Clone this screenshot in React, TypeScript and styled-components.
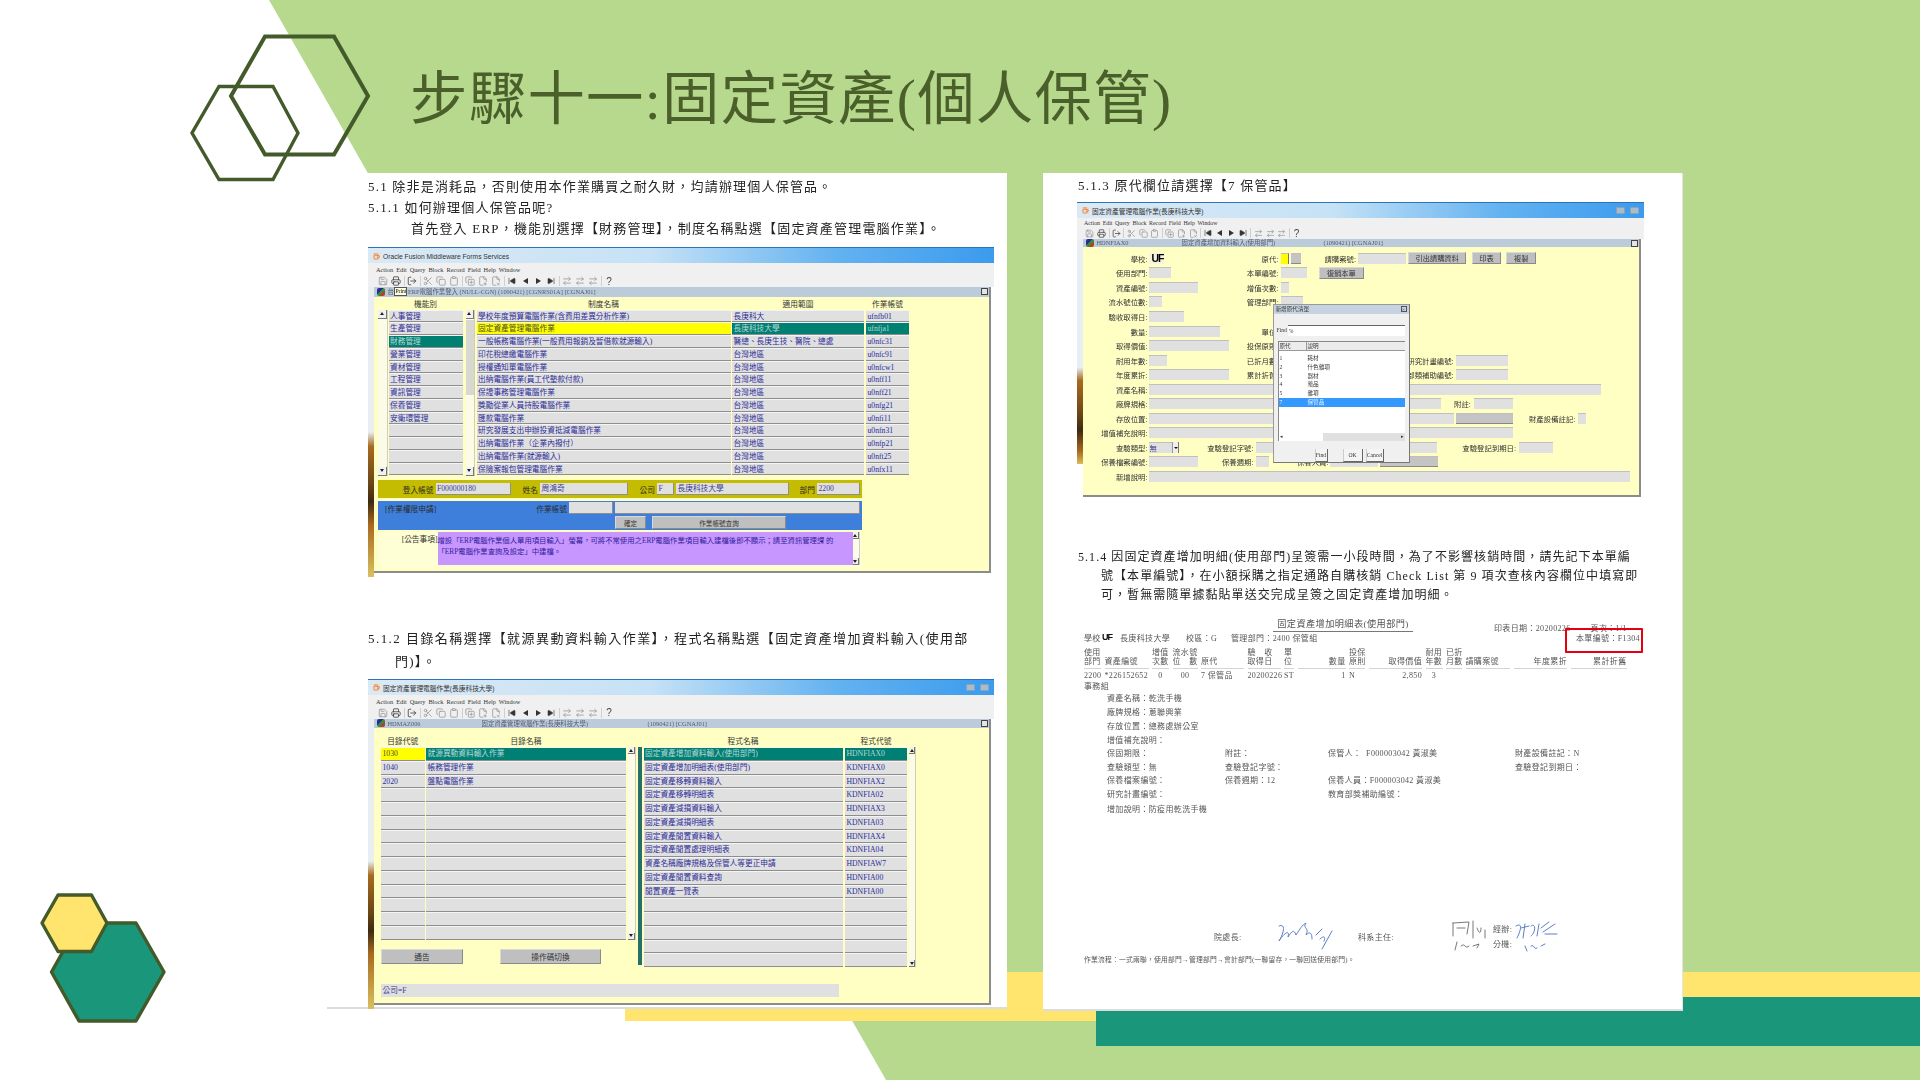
import React from "react";
import styled, { createGlobalStyle, css } from "styled-components";
import {
  Save,
  Printer,
  LogOut,
  Scissors,
  Copy,
  Clipboard,
  CopyPlus,
  FilePlus2,
  FileX2,
  SkipBack,
  SkipForward,
  ArrowRightLeft,
  Coffee,
} from "lucide-react";

const SERIF = `"Liberation Serif", "Noto Sans CJK TC", serif`;

const Global = createGlobalStyle`
  html, body { margin: 0; padding: 0; background: #fff; }
  * { box-sizing: border-box; }
`;

const Slide = styled.div`
  position: relative;
  width: 1920px;
  height: 1080px;
  overflow: hidden;
  background: #fff;
  font-family: ${SERIF};
`;
const Backdrop = styled.svg`
  position: absolute;
  inset: 0;
  width: 1920px;
  height: 1080px;
`;
const Header = styled.header`
  position: relative;
  height: 173px;
  padding: 27px 0 0 410px;
  display: flex;
  align-items: center;
`;
const Title = styled.h1`
  margin: 0;
  font-family: ${SERIF};
  font-size: 57.4px;
  font-weight: 400;
  letter-spacing: 1.3px;
  line-height: 1;
  color: #4b5f2b;
  white-space: nowrap;
`;
const Pages = styled.main`
  position: relative;
  display: flex;
  gap: 36px;
  padding-left: 327px;
`;
const Page = styled.section<{ $w: number; $h: number; $pl: number }>`
  width: ${(p) => p.$w}px;
  height: ${(p) => p.$h}px;
  padding-left: ${(p) => p.$pl}px;
  background: #fff;
  border-bottom: 2px solid #dcdcdc;
`;
const PageR = styled(Page)`
  border-right: 1px solid #e4e4e4;
`;
const Para = styled.p<{ $lh: number; $mt: number; $ml?: number; $fs?: number; $ls?: number; $hang?: number }>`
  margin: ${(p) => p.$mt}px 0 0 ${(p) => p.$ml ?? 0}px;
  font-size: ${(p) => p.$fs ?? 13}px;
  letter-spacing: ${(p) => p.$ls ?? 1.2}px;
  line-height: ${(p) => p.$lh}px;
  color: #222;
  white-space: nowrap;
  filter: blur(0.3px);
  ${(p) =>
    p.$hang &&
    css`
      padding-left: ${p.$hang}px;
      text-indent: -${p.$hang}px;
    `}
`;
const Indent = styled.span`
  display: inline-block;
  width: 43px;
`;

/* ---------- Oracle Forms window ---------- */
const Win = styled.div<{ $w: number; $h: number; $mt: number }>`
  position: relative;
  width: ${(p) => p.$w}px;
  height: ${(p) => p.$h}px;
  margin-top: ${(p) => p.$mt}px;
  display: flex;
  flex-direction: column;
  filter: blur(0.45px);
  font-size: 7.7px;
  color: #222;
`;
const TitleBar = styled.div`
  height: 16px;
  flex: none;
  display: flex;
  align-items: center;
  gap: 3px;
  padding: 1px 5px 0 5px;
  border-top: 1px solid #2a74b8;
  background: linear-gradient(90deg, #dbe9f4 0%, #c6e2f6 45%, #62b2f0 75%, #3c9bee 100%);
  font-family: "Liberation Sans", "Noto Sans CJK TC", sans-serif;
  font-size: 6.7px;
  color: #333;
  white-space: nowrap;
`;
const TitleSpacer = styled.span`
  flex: 1;
`;
const WinBtn = styled.span`
  width: 9px;
  height: 7px;
  margin-left: 2px;
  border-radius: 1px;
  background: #a8bccb;
  border: 1px solid #8aa3b5;
`;
const CupBox = styled.span`
  width: 7px;
  height: 7px;
  display: inline-flex;
  background: #f1d9c5;
  color: #d9601c;
`;
const MenuBar = styled.div<{ $compact?: boolean }>`
  height: ${(p) => (p.$compact ? 10 : 12)}px;
  flex: none;
  display: flex;
  align-items: center;
  gap: ${(p) => (p.$compact ? 2.6 : 3)}px;
  padding: 1px 0 0 ${(p) => (p.$compact ? 7 : 8)}px;
  background: #f0f0f0;
  font-size: ${(p) => (p.$compact ? 5.9 : 6.3)}px;
  color: #333;
`;
const ToolBar = styled.div<{ $compact?: boolean }>`
  height: ${(p) => (p.$compact ? 11 : 12)}px;
  flex: none;
  display: flex;
  align-items: center;
  padding-left: ${(p) => (p.$compact ? 7 : 8.5)}px;
  background: #f0f0f0;
  color: #777;
`;
const Tool = styled.span<{ $strong?: boolean; $w: number }>`
  width: ${(p) => p.$w}px;
  height: 11px;
  flex: none;
  display: inline-flex;
  align-items: center;
  justify-content: center;
  color: ${(p) => (p.$strong ? "#444" : "#9a9a9a")};
  font-size: 10px;
  font-family: "Liberation Sans", sans-serif;
`;
const ToolSep = styled.span`
  width: 1px;
  height: 10px;
  margin: 0 1px;
  background: #cfcfcf;
`;
const Tri = styled.span<{ $dir: "l" | "r" }>`
  width: 0;
  height: 0;
  border-top: 3.5px solid transparent;
  border-bottom: 3.5px solid transparent;
  ${(p) =>
    p.$dir === "l"
      ? "border-right: 5px solid #333;"
      : "border-left: 5px solid #333;"}
`;
const WinBody = styled.div`
  flex: 1;
  display: flex;
  min-height: 0;
`;
const Strip = styled.div<{ $from: number; $end: number }>`
  width: 5.5px;
  flex: none;
  background: linear-gradient(
    180deg,
    #e8eef2 0%,
    #e8eef2 ${(p) => p.$from}%,
    #a86a20 ${(p) => p.$from + 5}%,
    #6a4516 ${(p) => p.$from + 18}%,
    #3c2a10 ${(p) => p.$from + 24}%,
    #a86a20 ${(p) => p.$from + 32}%,
    #d9c060 ${(p) => p.$end}%,
    #fff ${(p) => p.$end}%
  );
`;
const Pane = styled.div`
  flex: 1;
  margin: 0 3px 4px 0;
  display: flex;
  flex-direction: column;
  border-right: 2px solid #8c8c8c;
  border-bottom: 2px solid #8c8c8c;
  min-width: 0;
`;
const Status = styled.div<{ $compact?: boolean }>`
  position: relative;
  height: ${(p) => (p.$compact ? 8.5 : 9.5)}px;
  flex: none;
  display: flex;
  align-items: center;
  padding-left: 3px;
  background: #bccbda;
  color: #555a70;
  font-size: 6.4px;
  white-space: nowrap;
`;
const StatusIcon = styled.span`
  width: 8px;
  height: 8px;
  flex: none;
  margin-right: 3px;
  border-radius: 2px;
  background: linear-gradient(135deg, #2a2a9a 0 40%, #3a8a3a 40% 65%, #c0392b 65%);
`;
const StatusText = styled.span<{ $w?: number }>`
  display: inline-block;
  width: ${(p) => (p.$w ? `${p.$w}px` : "auto")};
`;
const StatusBox = styled.span`
  position: absolute;
  right: 1px;
  top: 1px;
  width: 7px;
  height: 7px;
  background: #e4e4e4;
  border: 1.5px solid #444;
`;
const Tooltip = styled.span`
  flex: none;
  width: 13px;
  height: 9px;
  margin: 0 0.5px 0 0.5px;
  text-align: center;
  background: #ffffe1;
  border: 1px solid #555;
  color: #111;
  font-size: 5.6px;
  line-height: 7px;
`;
const Form = styled.div<{ $pl: number; $pt: number }>`
  flex: 1;
  min-height: 0;
  position: relative;
  padding: ${(p) => p.$pt}px 0 0 ${(p) => p.$pl}px;
  background: #ffffc4;
`;
const ListArea = styled.div`
  display: flex;
  align-items: flex-start;
`;
const Col = styled.div<{ $w: number; $ml?: number }>`
  width: ${(p) => p.$w}px;
  margin-left: ${(p) => p.$ml ?? 0}px;
  flex: none;
`;
const ColHead = styled.div<{ $h: number }>`
  height: ${(p) => p.$h}px;
  line-height: ${(p) => p.$h}px;
  text-align: center;
  color: #333;
  white-space: nowrap;
`;
const Cell = styled.div<{ $h: number; $st?: string }>`
  height: ${(p) => p.$h}px;
  line-height: ${(p) => p.$h - 1.5}px;
  padding-left: 1.5px;
  overflow: hidden;
  white-space: nowrap;
  background: #e0e0e0;
  color: #2c2c98;
  border-bottom: 1.5px solid #8e8e8e;
  border-top: 0.5px solid #f4f4f4;
  ${(p) =>
    p.$st === "teal" &&
    css`
      background: #007f73;
      color: #b9d7d5;
    `}
  ${(p) =>
    p.$st === "yellow" &&
    css`
      background: #ffff00;
      color: #4c4a30;
    `}
`;
const ScrollTrack = styled.div<{ $w: number; $h: number; $ml?: number; $mt: number }>`
  position: relative;
  flex: none;
  width: ${(p) => p.$w}px;
  height: ${(p) => p.$h}px;
  margin: ${(p) => p.$mt}px 0 0 ${(p) => p.$ml ?? 0}px;
  background: #fbfbe8;
  display: flex;
  flex-direction: column;
  justify-content: space-between;
  border-right: 1px solid #cfcfb4;
`;
const ScrollBtn = styled.span<{ $down?: boolean; $sq: number }>`
  flex: none;
  height: ${(p) => p.$sq}px;
  display: flex;
  align-items: center;
  justify-content: center;
  background: #f1f1f1;
  border-right: 1px solid #777;
  border-bottom: 1px solid #777;
  &::after {
    content: "";
    width: 0;
    height: 0;
    border-left: 2px solid transparent;
    border-right: 2px solid transparent;
    ${(p) =>
      p.$down ? "border-top: 3px solid #222;" : "border-bottom: 3px solid #222;"}
  }
`;
const Thumb = styled.span<{ $top: number; $h: number }>`
  position: absolute;
  left: 0;
  right: 0;
  top: ${(p) => p.$top}px;
  height: ${(p) => p.$h}px;
  background: #d8d8d0;
`;
const TealStrip = styled.div<{ $mt: number; $h: number; $ml: number }>`
  width: 4px;
  height: ${(p) => p.$h}px;
  margin: ${(p) => p.$mt}px 0 0 ${(p) => p.$ml}px;
  flex: none;
  background: #26706c;
`;
const Bar = styled.div<{ $bg: string; $mt: number; $h: number; $w: number; $ml?: number }>`
  width: ${(p) => p.$w}px;
  height: ${(p) => p.$h}px;
  margin: ${(p) => p.$mt}px 0 0 ${(p) => p.$ml ?? 0}px;
  background: ${(p) => p.$bg};
  display: flex;
  align-items: center;
`;
const BlueBar = styled(Bar)`
  flex-direction: column;
  align-items: flex-start;
  justify-content: flex-start;
  gap: 2px;
  padding-top: 1px;
`;
const BlueRow = styled.div<{ $pl?: number }>`
  display: flex;
  align-items: center;
  padding-left: ${(p) => p.$pl ?? 0}px;
`;
const BarLabel = styled.span<{ $w: number; $left?: boolean; $pl?: number }>`
  width: ${(p) => p.$w}px;
  flex: none;
  padding-left: ${(p) => p.$pl ?? 0}px;
  text-align: ${(p) => (p.$left ? "left" : "right")};
  color: #2a2a2a;
  white-space: nowrap;
`;
const BarField = styled.span<{ $w: number; $ml?: number; $h?: number }>`
  width: ${(p) => p.$w}px;
  height: ${(p) => p.$h ?? 12}px;
  line-height: ${(p) => p.$h ?? 12}px;
  margin-left: ${(p) => p.$ml ?? 2}px;
  flex: none;
  padding-left: 1.5px;
  background: #e0e0e0;
  color: #3c3c90;
  border-right: 1px solid #8e8e8e;
  border-bottom: 1px solid #8e8e8e;
  overflow: hidden;
  white-space: nowrap;
`;
const FormBtn = styled.span<{ $w: number; $ml?: number; $h: number; $fs?: number }>`
  width: ${(p) => p.$w}px;
  height: ${(p) => p.$h}px;
  line-height: ${(p) => p.$h}px;
  margin-left: ${(p) => p.$ml ?? 0}px;
  flex: none;
  display: inline-block;
  text-align: center;
  font-size: ${(p) => p.$fs ?? 7.7}px;
  color: #333;
  background: #bfbfbf;
  border-right: 1px solid #8a8a8a;
  border-bottom: 1px solid #8a8a8a;
  border-top: 1px solid #d9d9d9;
  border-left: 1px solid #d9d9d9;
  white-space: nowrap;
`;
const NoticeRow = styled.div`
  display: flex;
  width: 484px;
  height: 36px;
  margin-top: 2px;
  background: #ffffd6;
`;
const NoticeLabel = styled.span`
  width: 59.5px;
  flex: none;
  padding-top: 1px;
  text-align: right;
  color: #333;
  white-space: nowrap;
`;
const NoticeText = styled.div`
  width: 415px;
  height: 33px;
  flex: none;
  padding: 2.5px 1px 0 0;
  font-size: 7.35px;
  line-height: 11.5px;
  background: #c896ff;
  color: #30209a;
`;
const LeftBlock = styled.div`
  flex: none;
  display: flex;
  flex-direction: column;
`;
const ButtonRow = styled.div`
  display: flex;
  margin-top: 9px;
`;
const BottomField = styled.div`
  width: 458px;
  height: 13px;
  line-height: 13px;
  margin-top: 16.5px;
  padding-left: 1.5px;
  background: #e0e0e0;
  color: #3c3c90;
`;

/* ---------- record entry form ---------- */
const RecordRow = styled.div`
  display: flex;
  align-items: center;
  height: 14.55px;
`;
const RecLabel = styled.span<{ $w: number }>`
  width: ${(p) => p.$w}px;
  flex: none;
  text-align: right;
  font-size: 7.4px;
  color: #333;
  white-space: nowrap;
`;
const RecField = styled.span<{ $w: number; $ml: number; $kind?: string }>`
  width: ${(p) => p.$w}px;
  margin-left: ${(p) => p.$ml}px;
  height: 11px;
  flex: none;
  display: inline-flex;
  align-items: center;
  font-size: 7.4px;
  background: #e0e0e0;
  border-top: 1px solid #bfbfbf;
  color: #3c3c90;
  ${(p) =>
    p.$kind === "yellow" &&
    css`
      background: #ffff00;
      border-right: 1px solid #777;
    `}
  ${(p) =>
    p.$kind === "gray" &&
    css`
      background: #c4c4c4;
      border-bottom: 1px solid #888;
    `}
  ${(p) =>
    p.$kind === "logo" &&
    css`
      background: #f4f4e0;
      border: none;
      padding-left: 2px;
      color: #000;
      font: 700 10.5px "Liberation Sans", sans-serif;
      letter-spacing: -1px;
    `}
`;
const RecBtn = styled(FormBtn)<{ $mlx: number }>`
  margin-left: ${(p) => p.$mlx}px;
`;
const SelectCaret = styled.span`
  margin-left: auto;
  width: 7px;
  height: 11px;
  background: #f0f0f0;
  border-left: 1px solid #999;
  border-right: 1px solid #777;
  display: flex;
  align-items: center;
  justify-content: center;
  &::after {
    content: "";
    border-left: 2px solid transparent;
    border-right: 2px solid transparent;
    border-top: 2.5px solid #111;
  }
`;
const Dialog = styled.div`
  position: absolute;
  left: 195.5px;
  top: 102px;
  width: 137px;
  height: 159px;
  background: #f0f0f0;
  border: 1px solid #9a9a9a;
  border-right: 1.5px solid #777;
  border-bottom: 1.5px solid #777;
  display: flex;
  flex-direction: column;
  font-size: 5.6px;
  color: #333;
  z-index: 3;
`;
const DialogTitle = styled.div`
  height: 9px;
  flex: none;
  display: flex;
  align-items: center;
  justify-content: space-between;
  padding: 0 2px;
  background: #c6d2df;
`;
const DialogClose = styled.span`
  width: 6px;
  height: 6px;
  line-height: 5px;
  text-align: center;
  border: 1px solid #555;
  font-size: 5px;
`;
const FindRow = styled.div`
  display: flex;
  align-items: center;
  margin: 11px 4px 0 3px;
  gap: 1px;
`;
const FindInput = styled.span`
  flex: 1;
  height: 11px;
  line-height: 11px;
  padding-left: 1px;
  background: #fff;
  border-top: 1px solid #666;
`;
const DialogList = styled.div`
  margin: 5.5px 4px 0 4px;
  height: 100px;
  display: flex;
  flex-direction: column;
  background: #fff;
  border-top: 1px solid #888;
  border-left: 1px solid #888;
`;
const DialogHead = styled.div`
  display: flex;
  height: 9px;
  line-height: 9px;
  flex: none;
  background: #ececec;
  border-bottom: 1px solid #999;
`;
const DialogCol = styled.span<{ $w: number; $line?: boolean }>`
  width: ${(p) => p.$w}px;
  flex: none;
  padding-left: 1px;
  ${(p) => p.$line && "border-right: 1px solid #999;"}
`;
const DialogRow = styled.div<{ $sel?: boolean }>`
  display: flex;
  height: 8.8px;
  line-height: 8.8px;
  flex: none;
  ${(p) =>
    p.$sel &&
    css`
      background: #3399ff;
      color: #e8f2ff;
    `}
`;
const DialogRows = styled.div`
  flex: 1;
  padding-top: 3px;
`;
const DialogHScroll = styled.div`
  height: 7.5px;
  flex: none;
  display: flex;
  justify-content: space-between;
  background: linear-gradient(90deg, #fff 0 35%, #e0e0e0 35%);
  font-size: 5px;
  line-height: 7px;
  padding: 0 1px;
`;
const DialogBtns = styled.div`
  display: flex;
  margin: 8px 0 0 41px;
`;
const DialogBtn = styled.span<{ $w: number; $ml: number }>`
  width: ${(p) => p.$w}px;
  height: 13px;
  line-height: 12px;
  margin-left: ${(p) => p.$ml}px;
  text-align: center;
  background: #f4f4f4;
  border-right: 1.5px solid #666;
  border-bottom: 1.5px solid #666;
  border-left: 1px solid #ccc;
`;

/* ---------- printed report ---------- */
const Report = styled.div`
  position: relative;
  width: 565px;
  margin: 13px 0 0 7px;
  font-size: 8px;
  letter-spacing: 0.35px;
  color: #555;
  filter: blur(0.35px);
`;
const ReportTop = styled.div`
  display: flex;
  height: 14px;
  align-items: flex-start;
`;
const ReportTitle = styled.span`
  margin: 0 0 0 189px;
  width: 140px;
  text-align: center;
  font-size: 9.2px;
  line-height: 13px;
  letter-spacing: 0.4px;
  border-bottom: 1px solid #777;
`;
const ReportDate = styled.span`
  margin: 4px 0 0 81px;
  white-space: nowrap;
`;
const ReportPage = styled.span`
  margin: 4px 0 0 20px;
  white-space: nowrap;
`;
const ReportLine = styled.div`
  display: flex;
  align-items: center;
  height: 14px;
  white-space: nowrap;
`;
const Slot = styled.span<{ $w: number; $right?: boolean; $center?: boolean; $rule?: boolean }>`
  width: ${(p) => p.$w}px;
  flex: none;
  white-space: nowrap;
  line-height: 9px;
  text-align: ${(p) => (p.$right ? "right" : p.$center ? "center" : "left")};
  ${(p) => p.$rule && "border-bottom: 1px solid #d4d4d4; padding-bottom: 2px;"}
`;
const UfMark = styled.span`
  width: 11px;
  margin: -4px 7px 0 6px;
  font: 700 9px "Liberation Sans", sans-serif;
  letter-spacing: -1px;
  color: #111;
`;
const RedBox = styled.div`
  position: absolute;
  left: 481px;
  top: 10.5px;
  width: 78px;
  height: 25px;
  border: 2px solid #e3000f;
  border-radius: 1px;
`;
const ReportHead = styled.div`
  display: flex;
  align-items: flex-end;
  gap: 3.5px;
  height: 23px;
`;
const ReportData = styled.div`
  display: flex;
  align-items: center;
  gap: 3.5px;
  height: 14px;
`;
const Dept = styled.div`
  height: 8px;
  line-height: 7px;
  white-space: nowrap;
`;
const Details = styled.div`
  margin: 0.5px 0 0 23px;
`;
const DetailRow = styled.div`
  display: flex;
  align-items: center;
  height: 13.85px;
  white-space: nowrap;
`;
const SignRow = styled.div`
  display: flex;
  align-items: center;
  height: 30px;
  margin-top: 105.5px;
  padding-left: 130px;
  white-space: nowrap;
`;
const SignLabel = styled.span<{ $w: number; $pl?: number }>`
  width: ${(p) => p.$w}px;
  padding-left: ${(p) => p.$pl ?? 0}px;
  flex: none;
`;
const Scribble = styled.svg`
  flex: none;
  fill: none;
  stroke-linecap: round;
  stroke-linejoin: round;
`;
const SignStack = styled.div`
  display: flex;
  flex-direction: column;
  gap: 4px;
  width: 20px;
`;
const Flow = styled.div`
  margin-top: 4px;
  font-size: 6.8px;
  letter-spacing: 0.2px;
  line-height: 10px;
  white-space: nowrap;
`;

/* ---------- data ---------- */
const range = (n: number) => Array.from({ length: n }, (_, i) => i);

const Scroll = ({
  w,
  h,
  mt,
  ml,
  sq,
  thumb,
}: {
  w: number;
  h: number;
  mt: number;
  ml?: number;
  sq: number;
  thumb?: [number, number];
}) => (
  <ScrollTrack $w={w} $h={h} $mt={mt} $ml={ml}>
    <ScrollBtn $sq={sq} />
    {thumb && <Thumb $top={thumb[0]} $h={thumb[1]} />}
    <ScrollBtn $sq={sq} $down />
  </ScrollTrack>
);

const MENU = ["Action", "Edit", "Query", "Block", "Record", "Field", "Help", "Window"];

const Toolbar = ({ compact }: { compact?: boolean }) => {
  const tw = compact ? 11.8 : 13;
  const Icon = { size: compact ? 9 : 10, strokeWidth: 2 };
  return (
    <ToolBar $compact={compact}>
      <Tool $w={tw}>
        <Save {...Icon} />
      </Tool>
      <Tool $w={tw} $strong>
        <Printer {...Icon} />
      </Tool>
      <ToolSep />
      <Tool $w={tw} $strong>
        <LogOut {...Icon} />
      </Tool>
      <ToolSep />
      <Tool $w={tw}>
        <Scissors {...Icon} />
      </Tool>
      <Tool $w={tw}>
        <Copy {...Icon} />
      </Tool>
      <Tool $w={tw}>
        <Clipboard {...Icon} />
      </Tool>
      <ToolSep />
      <Tool $w={tw}>
        <CopyPlus {...Icon} />
      </Tool>
      <Tool $w={tw}>
        <FilePlus2 {...Icon} />
      </Tool>
      <Tool $w={tw}>
        <FileX2 {...Icon} />
      </Tool>
      <ToolSep />
      <Tool $w={tw} $strong>
        <SkipBack size={8} fill="#333" />
      </Tool>
      <Tool $w={tw} $strong>
        <Tri $dir="l" />
      </Tool>
      <Tool $w={tw} $strong>
        <Tri $dir="r" />
      </Tool>
      <Tool $w={tw} $strong>
        <SkipForward size={8} fill="#333" />
      </Tool>
      <ToolSep />
      <Tool $w={tw}>
        <ArrowRightLeft {...Icon} />
      </Tool>
      <Tool $w={tw}>
        <ArrowRightLeft {...Icon} />
      </Tool>
      <Tool $w={tw}>
        <ArrowRightLeft {...Icon} />
      </Tool>
      <ToolSep />
      <Tool $w={tw} $strong>
        ?
      </Tool>
    </ToolBar>
  );
};

const Chrome = ({
  title,
  w,
  h,
  mt,
  from,
  end = 100,
  buttons,
  compact,
  status,
  children,
  over,
}: {
  title: string;
  w: number;
  h: number;
  mt: number;
  from: number;
  end?: number;
  buttons?: boolean;
  compact?: boolean;
  status: React.ReactNode;
  children: React.ReactNode;
  over?: React.ReactNode;
}) => (
  <Win $w={w} $h={h} $mt={mt}>
    <TitleBar>
      <CupBox>
        <Coffee size={7} />
      </CupBox>
      {title}
      <TitleSpacer />
      {buttons && (
        <>
          <WinBtn />
          <WinBtn />
        </>
      )}
    </TitleBar>
    <MenuBar $compact={compact}>
      {MENU.map((m) => (
        <span key={m}>{m}</span>
      ))}
    </MenuBar>
    <Toolbar compact={compact} />
    <WinBody>
      <Strip $from={from} $end={end} />
      <Pane>
        <Status $compact={compact}>
          <StatusIcon />
          {status}
          <StatusBox />
        </Status>
        {children}
      </Pane>
    </WinBody>
    {over}
  </Win>
);

const W1_LIST = ["人事管理", "生產管理", "財務管理", "營業管理", "資材管理", "工程管理", "資訊管理", "保養管理", "安衛環管理", "", "", "", ""];
const W1_NAME = [
  "學校年度預算電腦作業(含費用差異分析作業)",
  "固定資產管理電腦作業",
  "一般帳務電腦作業(一般費用報銷及暫借款就源輸入)",
  "印花稅總繳電腦作業",
  "授權通知單電腦作業",
  "出納電腦作業(員工代墊款付款)",
  "保證事務管理電腦作業",
  "獎勵從業人員持股電腦作業",
  "匯款電腦作業",
  "研究發展支出申辦投資抵減電腦作業",
  "出納電腦作業（企業內撥付）",
  "出納電腦作業(就源輸入)",
  "保險案報包管理電腦作業",
];
const W1_RANGE = ["長庚科大", "長庚科技大學", "醫總、長庚生技、醫院、總處", ...range(10).map(() => "台灣地區")];
const W1_CODE = ["ufnfb01", "ufnfja1", "u0nfc31", "u0nfc91", "u0nfcw1", "u0nff11", "u0nff21", "u0nfg21", "u0nfi11", "u0nfn31", "u0nfp21", "u0nft25", "u0nfx11"];

const W2_A = ["1030", "1040", "2020"];
const W2_B = ["就源異動資料輸入作業", "帳務管理作業", "盤點電腦作業"];
const W2_C = [
  "固定資產增加資料輸入(使用部門)",
  "固定資產增加明細表(使用部門)",
  "固定資產移轉資料輸入",
  "固定資產移轉明細表",
  "固定資產減損資料輸入",
  "固定資產減損明細表",
  "固定資產閒置資料輸入",
  "固定資產閒置處理明細表",
  "資產名稱廠牌規格及保管人等更正申請",
  "固定資產閒置資料查詢",
  "閒置資產一覽表",
];
const W2_D = ["HDNFIAX0", "KDNFIAX0", "HDNFIAX2", "KDNFIA02", "HDNFIAX3", "KDNFIA03", "HDNFIAX4", "KDNFIA04", "HDNFIAW7", "HDNFIA00", "KDNFIA00"];

type RecCell = {
  label?: string;
  le?: number;
  s?: number;
  e?: number;
  kind?: string;
  text?: string;
  btn?: string;
};
const S = 1 / 2.613;
const RECORDS: RecCell[][] = [
  [
    { label: "學校:", le: 230, s: 235, e: 272, kind: "logo", text: "UF" },
    { label: "原代:", le: 572, s: 578, e: 600, kind: "yellow" },
    { s: 605, e: 632, kind: "gray" },
    { label: "請購案號:", le: 775, s: 780, e: 905 },
    { s: 912, e: 1062, btn: "引出請購資料" },
    { s: 1077, e: 1155, btn: "印表" },
    { s: 1168, e: 1246, btn: "複製" },
  ],
  [
    { label: "使用部門:", le: 230, s: 235, e: 292 },
    { label: "本單編號:", le: 572, s: 578, e: 647 },
    { s: 678, e: 795, btn: "復銷本單" },
  ],
  [
    { label: "資產編號:", le: 230, s: 235, e: 361 },
    { label: "增值次數:", le: 572, s: 578, e: 600 },
  ],
  [
    { label: "流水號位數:", le: 230, s: 235, e: 268 },
    { label: "管理部門:", le: 572, s: 578, e: 635 },
  ],
  [{ label: "驗收取得日:", le: 230, s: 235, e: 326 }],
  [
    { label: "數量:", le: 230, s: 235, e: 419 },
    { label: "單位:", le: 572, s: 578, e: 700 },
  ],
  [
    { label: "取得價值:", le: 230, s: 235, e: 442 },
    { label: "投保原則:", le: 572, s: 578, e: 800 },
  ],
  [
    { label: "耐用年數:", le: 230, s: 235, e: 280 },
    { label: "已折月數:", le: 572, s: 578, e: 700 },
    { label: "研究計畫編號:", le: 1030, s: 1036, e: 1172 },
  ],
  [
    { label: "年度累折:", le: 230, s: 235, e: 442 },
    { label: "累計折舊:", le: 572, s: 578, e: 800 },
    { label: "部類補助編號:", le: 1030, s: 1036, e: 1172 },
  ],
  [{ label: "資產名稱:", le: 230, s: 235, e: 1416 }],
  [
    { label: "廠牌規格:", le: 230, s: 235, e: 997 },
    { label: "附註:", le: 1075, s: 1082, e: 1185 },
  ],
  [
    { label: "存放位置:", le: 230, s: 235, e: 1030 },
    { s: 1036, e: 1185, kind: "gray" },
    { label: "財產設備註記:", le: 1348, s: 1354, e: 1376 },
  ],
  [{ label: "增值補充說明:", le: 230, s: 235, e: 1185 }],
  [
    { label: "查驗類型:", le: 230, s: 235, e: 313, kind: "select", text: "無" },
    { label: "查驗登記字號:", le: 507, s: 513, e: 987 },
    { label: "查驗登記到期日:", le: 1193, s: 1200, e: 1290 },
  ],
  [
    { label: "保養檔案編號:", le: 230, s: 235, e: 361 },
    { label: "保養週期:", le: 507, s: 513, e: 547 },
    { label: "保養人員:", le: 703, s: 708, e: 833 },
    { s: 838, e: 988, kind: "gray" },
  ],
  [{ label: "新增說明:", le: 230, s: 235, e: 1490 }],
];

const Records = () => (
  <>
    {RECORDS.map((row, i) => {
      let cur = 60;
      return (
        <RecordRow key={i}>
          {row.map((c, j) => {
            const s = c.s ?? 0;
            const e = c.e ?? 0;
            const le = c.le ?? cur;
            const labelW = (le - cur) * S;
            const ml = (s - le) * S;
            const w = (e - s) * S;
            cur = e;
            return (
              <React.Fragment key={j}>
                {c.label && <RecLabel $w={labelW}>{c.label}</RecLabel>}
                {c.btn ? (
                  <RecBtn $w={w} $h={12} $mlx={ml} $fs={7.2}>
                    {c.btn}
                  </RecBtn>
                ) : (
                  <RecField $w={w} $ml={ml} $kind={c.kind}>
                    {c.text}
                    {c.kind === "select" && <SelectCaret />}
                  </RecField>
                )}
              </React.Fragment>
            );
          })}
        </RecordRow>
      );
    })}
  </>
);

const REPORT_COLS: [string, string, number, ("r" | "c")?][] = [
  ["使用", "部門", 17],
  ["", "資產編號", 44],
  ["增值", "次數", 17],
  ["流水號", "位　數", 25],
  ["", "原代", 43],
  ["驗　收", "取得日", 33],
  ["單", "位", 10],
  ["", "數量", 48, "r"],
  ["投保", "原則", 16],
  ["", "取得價值", 53.5, "r"],
  ["耐用", "年數", 17],
  ["已折", "月數", 16],
  ["", "請購案號", 44.5],
  ["", "年度累折", 53.5, "r"],
  ["", "累計折舊", 56, "r"],
];
const REPORT_VALS = ["2200", "*226152652", "0", "00", "7 保管品", "20200226", "ST", "1", "N", "2,850", "3", "", "", "", ""];

const DIALOG_ROWS = [
  ["1", "耗材"],
  ["2", "什色雜項"],
  ["3", "器材"],
  ["4", "藥品"],
  ["5", "雜項"],
  ["7", "保管品"],
];

export default function App() {
  return (
    <Slide>
      <Global />
      <Backdrop viewBox="0 0 1920 1080">
        <polygon points="269,0 1920,0 1920,1080 886,1080" fill="#b7d98e" />
        <rect x="625" y="972" width="1295" height="49" fill="#ffe56d" />
        <rect x="1096" y="997" width="824" height="49" fill="#1a967b" />
        <g fill="none" stroke="#435a2a" strokeWidth="4" strokeLinejoin="miter">
          <polygon points="265,36.5 334,36.5 368,96 334,154.5 265,154.5 231,96" />
          <polygon points="219,86.5 273,86.5 298,133 273,179.5 219,179.5 192,133" strokeWidth="3.4" />
        </g>
        <g stroke="#435a2a" strokeWidth="3.4" strokeLinejoin="round">
          <polygon points="79,923 136,923 164,972 136,1021 79,1021 51.5,972" fill="#1a967b" />
          <polygon points="58,895 91.5,895 107,923 91.5,951.5 58,951.5 42,923" fill="#ffe56d" />
        </g>
      </Backdrop>

      <Header>
        <Title>步驟十一:固定資產(個人保管)</Title>
      </Header>

      <Pages>
        <Page $w={680} $h={836} $pl={41}>
          <Para $lh={21} $mt={2.5}>
            5.1 除非是消耗品，否則使用本作業購買之耐久財，均請辦理個人保管品。
            <br />
            5.1.1 如何辦理個人保管品呢?
            <br />
            <Indent />
            首先登入 ERP，機能別選擇【財務管理】，制度名稱點選【固定資產管理電腦作業】。
          </Para>
          <Chrome
            title="Oracle Fusion Middleware Forms Services"
            w={626}
            h={330}
            mt={8.5}
            from={50}
            status={
              <>
                <StatusText>台</StatusText>
                <Tooltip>Print</Tooltip>
                <StatusText>ERP電腦作業登入 (NULL-CGN) (1090421) [CGNRS01A] [CGNAJ01]</StatusText>
              </>
            }
          >
            <Form $pl={4.5} $pt={3}>
              <ListArea>
                <Scroll w={9.5} h={166} mt={10} sq={9} />
                <Col $w={74} $ml={1}>
                  <ColHead $h={10}>機能別</ColHead>
                  {W1_LIST.map((t, i) => (
                    <Cell key={i} $h={12.77} $st={i === 2 ? "teal" : undefined}>
                      {t}
                    </Cell>
                  ))}
                </Col>
                <Scroll w={9.5} h={166} mt={10} ml={3} sq={9} thumb={[10, 75]} />
                <Col $w={254} $ml={1.5}>
                  <ColHead $h={10}>制度名稱</ColHead>
                  {W1_NAME.map((t, i) => (
                    <Cell key={i} $h={12.77} $st={i === 1 ? "yellow" : undefined}>
                      {t}
                    </Cell>
                  ))}
                </Col>
                <Col $w={132} $ml={1.5}>
                  <ColHead $h={10}>適用範圍</ColHead>
                  {W1_RANGE.map((t, i) => (
                    <Cell key={i} $h={12.77} $st={i === 1 ? "teal" : undefined}>
                      {t}
                    </Cell>
                  ))}
                </Col>
                <Col $w={43} $ml={2}>
                  <ColHead $h={10}>作業帳號</ColHead>
                  {W1_CODE.map((t, i) => (
                    <Cell key={i} $h={12.77} $st={i === 1 ? "teal" : undefined}>
                      {t}
                    </Cell>
                  ))}
                </Col>
              </ListArea>
              <Bar $bg="#c4bc00" $mt={4.5} $h={18} $w={484}>
                <BarLabel $w={55.5}>登入帳號</BarLabel>
                <BarField $w={75.5}>F000000180</BarField>
                <BarLabel $w={27}>姓名</BarLabel>
                <BarField $w={88}>周鴻奇</BarField>
                <BarLabel $w={27}>公司</BarLabel>
                <BarField $w={17}>F</BarField>
                <BarField $w={113}>長庚科技大學</BarField>
                <BarLabel $w={26}>部門</BarLabel>
                <BarField $w={43}>2200</BarField>
              </Bar>
              <BlueBar $bg="#3f7fdc" $mt={3} $h={29} $w={484}>
                <BlueRow>
                  <BarLabel $w={135} $left $pl={7}>
                    [作業權限申請]
                  </BarLabel>
                  <BarLabel $w={54}>作業帳號</BarLabel>
                  <BarField $w={44}></BarField>
                  <BarField $w={245}></BarField>
                </BlueRow>
                <BlueRow $pl={237}>
                  <FormBtn $w={31} $h={13} $fs={6.6}>
                    確定
                  </FormBtn>
                  <FormBtn $w={134} $h={13} $ml={6} $fs={6.6}>
                    作業帳號查詢
                  </FormBtn>
                </BlueRow>
              </BlueBar>
              <NoticeRow>
                <NoticeLabel>[公告事項]</NoticeLabel>
                <NoticeText>
                  增設「ERP電腦作業個人單用項目輸入」螢幕，可將不常使用之ERP電腦作業項目輸入建檔後即不顯示；請至資訊管理課
                  的「ERP電腦作業查詢及設定」中建檔。
                </NoticeText>
                <Scroll w={7.5} h={33} mt={0} sq={7} />
              </NoticeRow>
            </Form>
          </Chrome>
          <Para $lh={23} $mt={50} $ls={1.45}>
            5.1.2 目錄名稱選擇【就源異動資料輸入作業】，程式名稱點選【固定資產增加資料輸入(使用部
          </Para>
          <Para $lh={23} $mt={0} $ml={27}>
            門)】。
          </Para>
          <Chrome
            title="固定資產管理電腦作業(長庚科技大學)"
            w={626}
            h={330}
            mt={5.5}
            from={49}
            buttons
            status={
              <>
                <StatusText $w={94}>HDMAZ006</StatusText>
                <StatusText $w={166}>固定資產管理電腦作業(長庚科技大學)</StatusText>
                <StatusText>(1090421) [CGNAJ01]</StatusText>
              </>
            }
          >
            <Form $pl={7.5} $pt={9}>
              <ListArea>
                <LeftBlock>
                  <ListArea>
                    <Col $w={43.5}>
                      <ColHead $h={10}>目錄代號</ColHead>
                      {range(14).map((i) => (
                        <Cell key={i} $h={13.77} $st={i === 0 ? "yellow" : undefined}>
                          {W2_A[i]}
                        </Cell>
                      ))}
                    </Col>
                    <Col $w={200} $ml={1.5}>
                      <ColHead $h={10}>目錄名稱</ColHead>
                      {range(14).map((i) => (
                        <Cell key={i} $h={13.77} $st={i === 0 ? "teal" : undefined}>
                          {W2_B[i]}
                        </Cell>
                      ))}
                    </Col>
                    <Scroll w={7.5} h={192.8} mt={10} ml={2} sq={7} />
                  </ListArea>
                  <ButtonRow>
                    <FormBtn $w={82} $h={15}>
                      通告
                    </FormBtn>
                    <FormBtn $w={101} $h={15} $ml={37}>
                      操作碼切換
                    </FormBtn>
                  </ButtonRow>
                </LeftBlock>
                <TealStrip $ml={2} $mt={10} $h={218} />
                <Col $w={199} $ml={2}>
                  <ColHead $h={10}>程式名稱</ColHead>
                  {range(16).map((i) => (
                    <Cell key={i} $h={13.77} $st={i === 0 ? "teal" : undefined}>
                      {W2_C[i]}
                    </Cell>
                  ))}
                </Col>
                <Col $w={62} $ml={2.5}>
                  <ColHead $h={10}>程式代號</ColHead>
                  {range(16).map((i) => (
                    <Cell key={i} $h={13.77} $st={i === 0 ? "teal" : undefined}>
                      {W2_D[i]}
                    </Cell>
                  ))}
                </Col>
                <Scroll w={7} h={220} mt={10} ml={2} sq={7} />
              </ListArea>
              <BottomField>公司=F</BottomField>
            </Form>
          </Chrome>
        </Page>

        <PageR $w={640} $h={838} $pl={34}>
          <Para $lh={21} $mt={1.5} $ml={1}>
            5.1.3 原代欄位請選擇【7 保管品】
          </Para>
          <Chrome
            title="固定資產管理電腦作業(長庚科技大學)"
            w={567}
            h={299}
            mt={6}
            from={49}
            end={86}
            buttons
            compact
            status={
              <>
                <StatusText $w={85}>HDNFIAX0</StatusText>
                <StatusText $w={142}>固定資產增加資料輸入(使用部門)</StatusText>
                <StatusText>(1090421) [CGNAJ01]</StatusText>
              </>
            }
            over={
              <Dialog>
                <DialogTitle>
                  新增原代清單
                  <DialogClose>×</DialogClose>
                </DialogTitle>
                <FindRow>
                  Find
                  <FindInput>%</FindInput>
                </FindRow>
                <DialogList>
                  <DialogHead>
                    <DialogCol $w={28} $line>
                      原代
                    </DialogCol>
                    <DialogCol $w={80}>說明</DialogCol>
                  </DialogHead>
                  <DialogRows>
                    {DIALOG_ROWS.map(([a, b]) => (
                      <DialogRow key={a} $sel={a === "7"}>
                        <DialogCol $w={28}>{a}</DialogCol>
                        <DialogCol $w={80}>{b}</DialogCol>
                      </DialogRow>
                    ))}
                  </DialogRows>
                  <DialogHScroll>
                    <span>◂</span>
                    <span>▸</span>
                  </DialogHScroll>
                </DialogList>
                <DialogBtns>
                  <DialogBtn $w={13} $ml={0}>
                    Find
                  </DialogBtn>
                  <DialogBtn $w={20} $ml={15}>
                    OK
                  </DialogBtn>
                  <DialogBtn $w={18} $ml={3}>
                    Cancel
                  </DialogBtn>
                </DialogBtns>
              </Dialog>
            }
          >
            <Form $pl={0} $pt={4}>
              <Records />
            </Form>
          </Chrome>
          <Para $lh={19} $mt={47} $ml={1} $fs={12} $ls={1.06} $hang={23}>
            5.1.4 因固定資產增加明細(使用部門)呈簽需一小段時間，為了不影響核銷時間，請先記下本單編
            <br />
            號【本單編號】，在小額採購之指定通路自購核銷 Check List 第 9 項次查核內容欄位中填寫即
            <br />
            可，暫無需隨單據黏貼單送交完成呈簽之固定資產增加明細。
          </Para>
          <Report>
            <ReportTop>
              <ReportTitle>固定資產增加明細表(使用部門)</ReportTitle>
              <ReportDate>印表日期：20200226</ReportDate>
              <ReportPage>頁次：1/1</ReportPage>
            </ReportTop>
            <ReportLine>
              <Slot $w={12}>學校</Slot>
              <UfMark>UF</UfMark>
              <Slot $w={66}>長庚科技大學</Slot>
              <Slot $w={45}>校區：G</Slot>
              <Slot $w={345}>管理部門：2400 保管組</Slot>
              <Slot $w={70}>本單編號：F1304</Slot>
            </ReportLine>
            <RedBox />
            <ReportHead>
              {REPORT_COLS.map(([a, b, w, al], i) => (
                <Slot key={i} $w={w} $right={al === "r"} $rule>
                  {a}
                  <br />
                  {b}
                </Slot>
              ))}
            </ReportHead>
            <ReportData>
              {REPORT_COLS.map(([, , w, al], i) => (
                <Slot key={i} $w={w} $right={al === "r"} $center={i === 2 || i === 3 || i === 10}>
                  {REPORT_VALS[i]}
                </Slot>
              ))}
            </ReportData>
            <Dept>事務組</Dept>
            <Details>
              <DetailRow>資產名稱：乾洗手機</DetailRow>
              <DetailRow>廠牌規格：蔥聯興業</DetailRow>
              <DetailRow>存放位置：總務處辦公室</DetailRow>
              <DetailRow>增值補充說明：</DetailRow>
              <DetailRow>
                <Slot $w={118}>保固期限：</Slot>
                <Slot $w={103}>附註：</Slot>
                <Slot $w={187}>保管人：&nbsp;&nbsp;F000003042 黃淑美</Slot>
                <Slot $w={80}>財產設備註記：N</Slot>
              </DetailRow>
              <DetailRow>
                <Slot $w={118}>查驗類型：無</Slot>
                <Slot $w={290}>查驗登記字號：</Slot>
                <Slot $w={80}>查驗登記到期日：</Slot>
              </DetailRow>
              <DetailRow>
                <Slot $w={118}>保養檔案編號：</Slot>
                <Slot $w={103}>保養週期：12</Slot>
                <Slot $w={187}>保養人員：F000003042 黃淑美</Slot>
              </DetailRow>
              <DetailRow>
                <Slot $w={221}>研究計畫編號：</Slot>
                <Slot $w={187}>教育部獎補助編號：</Slot>
              </DetailRow>
              <DetailRow>增加說明：防疫用乾洗手機</DetailRow>
            </Details>
            <SignRow>
              <SignLabel $w={62}>院處長:</SignLabel>
              <Scribble width="60" height="30" viewBox="0 0 60 30" stroke="#5b7fc7" strokeWidth="1">
                <path d="M3 5 C10 2 8 12 3 20 C8 12 14 8 12 16 C16 10 18 8 20 14 C24 8 26 4 30 2 C26 8 34 6 30 14 C34 10 36 12 36 18 M40 14 L46 8 M44 18 C48 14 50 16 48 20 M46 28 L56 10" />
              </Scribble>
              <SignLabel $w={115} $pl={22}>
                科系主任:
              </SignLabel>
              <Scribble width="42" height="32" viewBox="0 0 42 32" stroke="#555" strokeWidth="0.8">
                <path d="M2 3 L2 16 M2 3 L18 2 L16 14 M6 8 L14 8 M22 1 L22 18 M26 8 C28 14 30 14 30 8 M34 10 L34 18 M4 30 L6 22 M10 26 C14 22 14 30 18 26 M22 26 L28 24 L26 28" />
              </Scribble>
              <SignStack>
                <span>經辦:</span>
                <span>分機:</span>
              </SignStack>
              <Scribble width="46" height="32" viewBox="0 0 46 32" stroke="#5b7fc7" strokeWidth="1">
                <path d="M3 6 C10 2 8 10 4 18 M8 8 L16 6 M12 4 L10 18 M18 6 C24 2 22 14 18 16 M26 4 L24 16 M28 8 L36 2 M30 12 L42 4 M32 14 L44 14 M12 26 L14 31 M18 26 C22 24 20 30 24 28 M28 26 L32 24" />
              </Scribble>
            </SignRow>
            <Flow>作業流程：一式兩聯，使用部門→管理部門→會計部門(一聯留存，一聯回送使用部門)。</Flow>
          </Report>
        </PageR>
      </Pages>
    </Slide>
  );
}
